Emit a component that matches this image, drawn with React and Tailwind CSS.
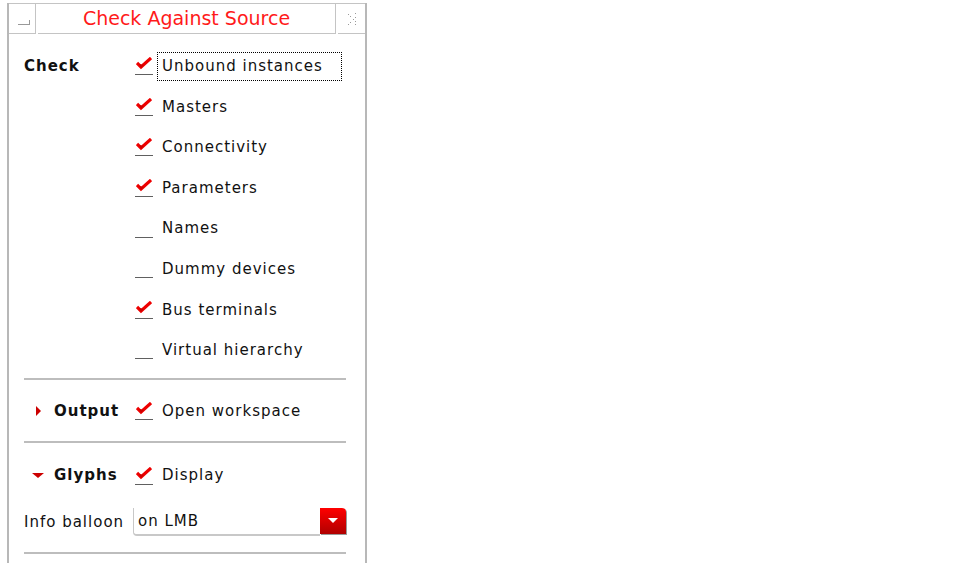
import React from "react";

const FONT = { fontFamily: '"DejaVu Sans", Verdana, sans-serif' };

function Check({ on }) {
  return (
    <div className="relative w-[18px] h-[20px]">
      {on && (
        <svg className="absolute left-[1px] top-[1px]" width="16" height="14" viewBox="0 0 16 14">
          <path d="M1 6 L5 10 L15 1" fill="none" stroke="#ee0000" strokeWidth="3.2" strokeLinejoin="miter" />
          <path d="M3 7 L5 11 L8 8" fill="#cc0000" />
        </svg>
      )}
      <div className="absolute left-0 bottom-[1px] w-[18px] h-[1px] bg-[#606060]" />
    </div>
  );
}

function Row({ on, text, focus, head }) {
  return (
    <div className="grid grid-cols-[111px_27px_1fr] items-center h-[40.6px]">
      <div>{head}</div>
      <Check on={on} />
      <div className="flex">
        <span className={focus ? "pl-[4px] pr-[18px] -ml-[5px] py-[2px] border border-dotted border-black" : ""}>{text}</span>
      </div>
    </div>
  );
}

export default function App() {
  const checks = [
    ["Unbound instances", true, true],
    ["Masters", true],
    ["Connectivity", true],
    ["Parameters", true],
    ["Names", false],
    ["Dummy devices", false],
    ["Bus terminals", true],
    ["Virtual hierarchy", false],
  ];
  return (
    <div className="w-[965px] h-[563px] bg-white overflow-hidden text-[15px] tracking-[1px] text-[#111]" style={FONT}>
      <div className="ml-[7px] mt-[3px] w-[360px] h-[600px] border-l-2 border-r-2 border-[#b8b8b8]">
        {/* title bar */}
        <div className="flex h-[31px] border-t border-[#c4c4c4]">
          <div className="relative w-[27px] border-r border-b border-[#c4c4c4]">
            <div className="absolute left-[9px] top-[20px] w-[12px] h-[1px] bg-[#999]" />
            <div className="absolute left-[20px] top-[16px] w-[1px] h-[4px] bg-[#999]" />
          </div>
          <div className="flex-1 ml-[2px] border-b border-r border-[#c4c4c4] flex items-center justify-center text-[19px] tracking-normal text-[#ff1a1a]">
            Check Against Source
          </div>
          <div className="w-[27px] ml-[2px] border-b border-[#c4c4c4] flex items-center justify-center">
            <svg width="12" height="14" viewBox="0 0 12 14">
              <g fill="#9a9a9a">
                <rect x="2" y="2" width="1" height="1" />
                <rect x="4" y="4" width="1" height="1" />
                <rect x="9" y="1" width="1" height="1" />
                <rect x="9" y="5" width="1" height="1" />
                <rect x="7" y="7" width="1" height="1" />
                <rect x="9" y="9" width="1" height="1" />
                <rect x="9" y="12" width="1" height="1" />
                <rect x="4" y="10" width="1" height="1" />
                <rect x="2" y="12" width="1" height="1" />
              </g>
            </svg>
          </div>
        </div>

        <div className="pl-[15px] pr-[19px] pt-[12px]">
          {checks.map(([t, on, focus], i) => (
            <Row
              key={t}
              text={t}
              on={on}
              focus={focus}
              head={i === 0 ? <span className="font-bold">Check</span> : null}
            />
          ))}

          <div className="mt-[7px] h-[2px] bg-[#bdbdbd]" />
          <div className="mt-[11px]">
            <Row
              text="Open workspace"
              on
              head={
                <div className="flex items-center">
                  <div className="ml-[12px] w-0 h-0 border-y-[5px] border-y-transparent border-l-[5px] border-l-[#cc0000]" />
                  <span className="ml-[13px] font-bold">Output</span>
                </div>
              }
            />
          </div>
          <div className="mt-[10px] h-[2px] bg-[#bdbdbd]" />
          <div className="mt-[12px]">
            <Row
              text="Display"
              on
              head={
                <div className="flex items-center">
                  <div className="ml-[8px] w-0 h-0 border-x-[6px] border-x-transparent border-t-[5px] border-t-[#cc0000]" />
                  <span className="ml-[10px] font-bold">Glyphs</span>
                </div>
              }
            />
          </div>

          <div className="grid grid-cols-[109px_1fr] items-center mt-[12px]">
            <span>Info balloon</span>
            <div className="flex items-stretch h-[28px]">
              <div className="flex-1 flex items-center pl-[4px] border-l border-b-2 border-[#c8c8c8] rounded-bl-[4px]">
                on LMB
              </div>
              <div className="w-[26px] h-[26px] rounded-tr-[4px] bg-gradient-to-b from-[#ff0000] to-[#b00000] flex items-center justify-center shadow-[1px_1px_0_#999]">
                <div className="w-0 h-0 border-x-[5px] border-x-transparent border-t-[5px] border-t-white" />
              </div>
            </div>
          </div>
          <div className="mt-[16px] h-[2px] bg-[#bdbdbd]" />
        </div>
      </div>
    </div>
  );
}
